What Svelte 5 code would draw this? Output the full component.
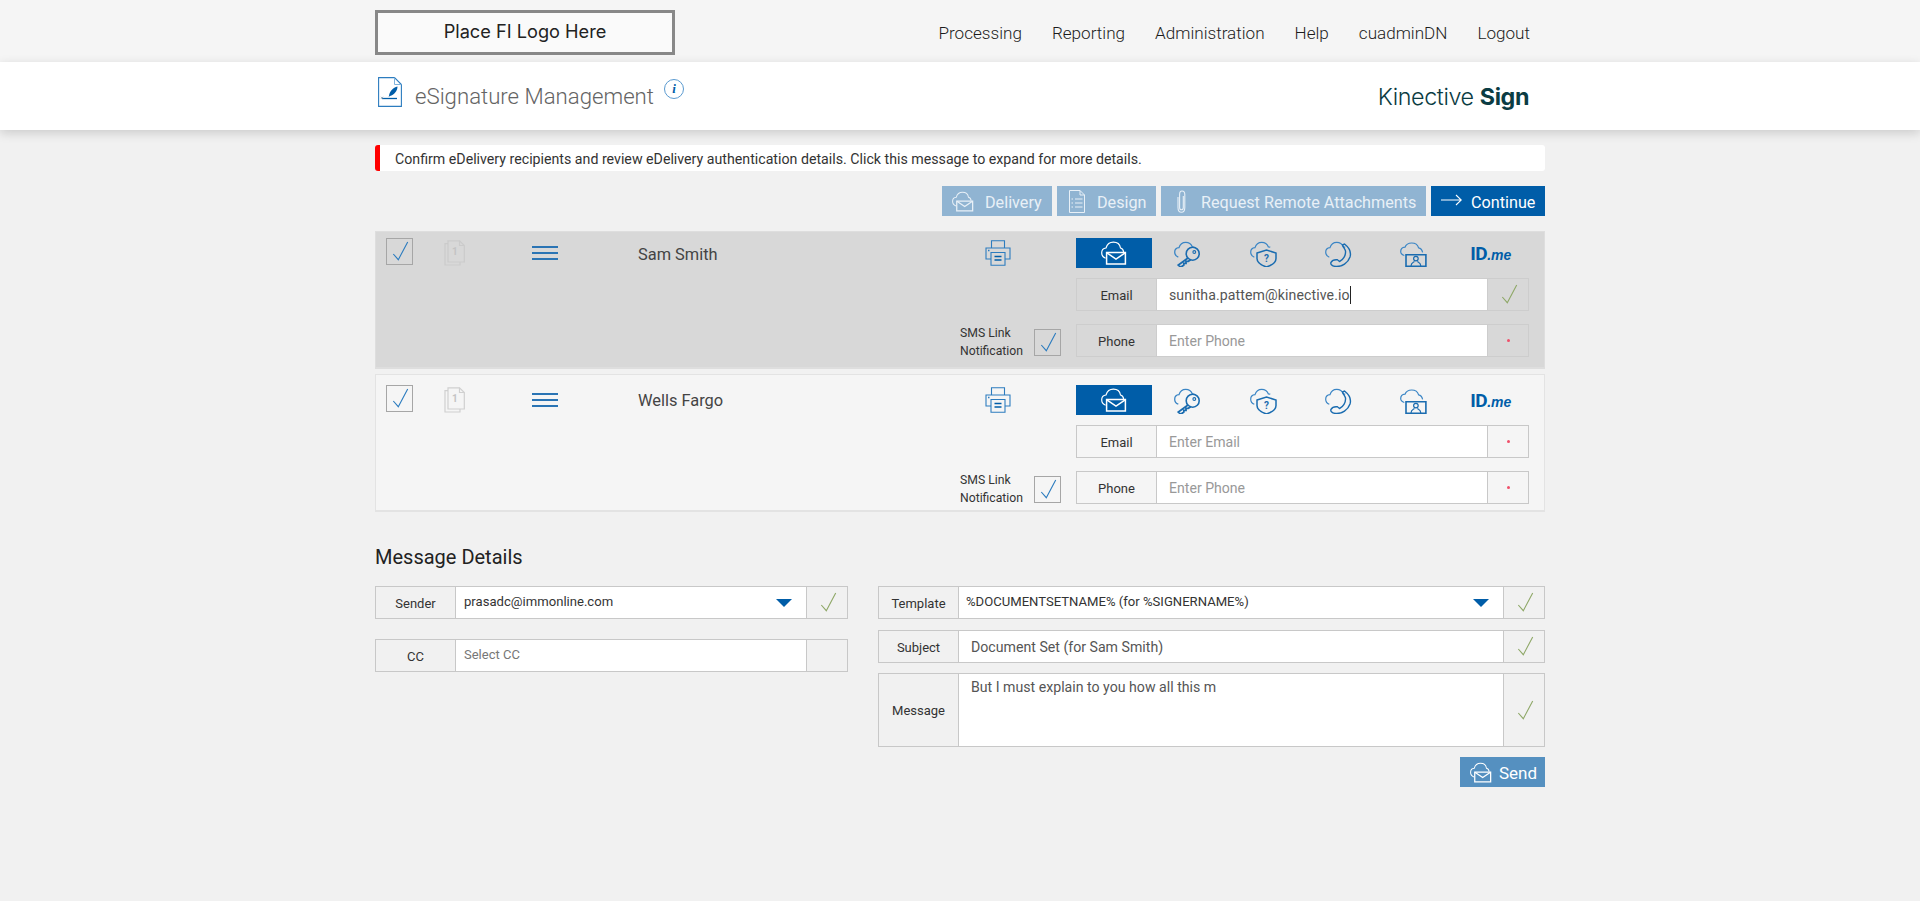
<script>
  const nav = ['Processing', 'Reporting', 'Administration', 'Help', 'cuadminDN', 'Logout'];
  const signers = [
    { name: 'Sam Smith', active: true, email: 'sunitha.pattem@kinective.io' },
    { name: 'Wells Fargo', active: false, email: '' }
  ];
</script>

{#snippet check(cls)}
  <svg class={cls} viewBox="0 0 27 27" width="27" height="27"><path d="M7.3 16 12.3 21.7 21.7 4" fill="none" stroke="currentColor" stroke-width="1.1"/></svg>
{/snippet}

{#snippet mail(w, h)}
  <svg width={w} height={h} viewBox="0 0 26 24" fill="none" stroke="currentColor" stroke-width="1.2">
    <path d="M4.6 17.2C2.2 16.4.7 14.2.7 11.8.7 9.2 2.6 7.2 5 7 6 3.6 9 1.2 12.4 1.2c3.6 0 6.5 2.4 7.1 5.8 1.7.4 2.9 1.9 3.1 4"/>
    <path d="M5.6 11.6H24.4V23H5.6Z" stroke-width="1.5"/><path d="M5.8 11.8 15 18 24.2 11.8" stroke-width="1.5"/>
  </svg>
{/snippet}

{#snippet cloud()}
  <path class="cl" d="M4.3 17.2C2.2 16.4.7 14.5.7 12.2.7 9.7 2.6 7.8 5 7.6 6 4.4 8.6 2.400 11.700 2.400c3 0 5.500 1.600 6.600 4.400.8 0 1.500.2 2 .5"/>
{/snippet}

{#snippet signer(s)}
  <div class="signer" class:active={s.active}>
    <div class="box">{@render check('chk')}</div>
    <div class="doc">
      <svg width="21" height="26" viewBox="0 0 21 26" fill="none" stroke="currentColor" stroke-width="1.2">
        <path d="M4 3.600H1V25H16V22"/><path d="M4 .8H15.500L20.300 5.500V22H4Z"/><path d="M15.500.8V5.500H20.300"/>
      </svg>
      <span>1</span>
    </div>
    <div class="burger"><i></i><i></i><i></i></div>
    <div class="name">{s.name}</div>
    <div class="mid">
      <svg class="printer" width="26" height="26" viewBox="0 0 26 26" fill="none" stroke="#2c7cbf" stroke-width="1.1">
        <path d="M6.500 8V.8H19.500V8"/><path d="M6 19H1V8H25V19H20"/><path d="M6 12.500H20V25.300H6Z"/>
        <path d="M9.500 16.500H16.500M9.500 20H16.500" stroke="#005da8" stroke-width="1.300"/><path d="M3 10.500H4.500" stroke-width="1.500"/>
      </svg>
      <div class="sms">
        <span class="smstext">SMS Link<br />Notification</span>
        <div class="box">{@render check('chk')}</div>
      </div>
    </div>
    <div class="auth">
      <div class="tabs">
        <div class="tab on">{@render mail(26, 24)}</div>
        <div class="tab ic i-key">
          <svg width="27" height="27" viewBox="0 0 27 27" fill="none" stroke="#1a6cb0" stroke-width="1.300">
            {@render cloud()}
            <circle cx="18.700" cy="13.700" r="6.500" stroke-width="1.600"/><circle cx="20.300" cy="12" r="1.400" stroke-width="1.100"/>
            <path d="M14.300 17.800 4.300 25 6.800 27.300 9.800 25V23.300H12V21.300H14.300L17 19.500" stroke-width="1.800"/>
          </svg>
        </div>
        <div class="tab ic i-shield">
          <svg width="27" height="27" viewBox="0 0 27 27" fill="none" stroke="#1a6cb0" stroke-width="1.200">
            {@render cloud()}
            <path d="M7 13 16.500 10 26 13V18.500C26 22 22.500 25 16.500 27 10.500 25 7 22 7 18.500Z" stroke-width="1.500"/>
            <text x="16.500" y="21.500" text-anchor="middle" class="q">?</text>
          </svg>
        </div>
        <div class="tab ic i-phone">
          <svg width="27" height="27" viewBox="0 0 27 27" fill="none" stroke="#1a6cb0" stroke-width="1.200">
            {@render cloud()}
            <path d="M17.500 5 19.500 4C24 7.500 26.500 12 25 17 23 23 17 26.800 11 26.500 7 26.300 5.200 24 6 22.300 7 20.500 10 19.500 12.500 19.800L14.500 21.500C18 20 21 15.500 20.500 11 20 9 18.300 7.500 17.500 5Z" stroke-width="1.400"/>
          </svg>
        </div>
        <div class="tab ic i-screen">
          <svg width="27" height="27" viewBox="0 0 27 27" fill="none" stroke="#1a6cb0" stroke-width="1.200">
            <path class="cl" d="M4.300 15.500C2.200 14.900.7 13.500.7 11.500.7 9 2.600 7.400 5 7.200 6 4.500 8.600 3 11.700 3c3.300 0 6 1.700 6.900 4.800 2 .3 3.500 2 4 4.500"/>
            <path d="M6 14.700H25.900V26.300H6Z" stroke-width="1.600"/>
            <circle cx="15.900" cy="18.600" r="2.300"/><path d="M11 26C11 22.800 13 22.500 14.500 21.500M20.800 26C20.800 22.800 18.800 22.500 17.300 21.500"/>
          </svg>
        </div>
        <div class="tab idme"><b>ID</b><em>.me</em></div>
      </div>
      <div class="field first" class:filled={s.email}>
        <span class="lbl">Email</span>
        <div class="val">
          {#if s.email}<span class="typed">{s.email}</span><span class="caret"></span>{:else}<span class="ph">Enter Email</span>{/if}
        </div>
        <div class="st">{#if s.email}{@render check('ok')}{:else}<i class="dot"></i>{/if}</div>
      </div>
      <div class="field">
        <span class="lbl">Phone</span>
        <div class="val"><span class="ph">Enter Phone</span></div>
        <div class="st"><i class="dot"></i></div>
      </div>
    </div>
  </div>
{/snippet}

<div class="page">
  <header class="top">
    <div class="wrap topin">
      <div class="logo">Place FI Logo Here</div>
      <nav>{#each nav as n}<span>{n}</span>{/each}</nav>
    </div>
  </header>
  <div class="head">
    <div class="wrap headin">
      <svg class="sig" width="24" height="30" viewBox="0 0 24 30" fill="none">
        <path d="M.6.6H16.500L23.400 7.500V29.400H.6Z" stroke="#2c7cbf" stroke-width="1.100"/><path d="M16.500.6V7.500H23.400" stroke="#7fb2dc" stroke-width="1"/>
        <path d="M11 19C11.500 14.500 15 10.500 19.500 9.500 19.500 14 16 18 12 19L10.500 20Z" fill="#005da8"/>
        <path d="M4 21.500H19" stroke="#005da8" stroke-width="1.300"/><path d="M3 19.800 5 21.800M5 19.800 3 21.800" stroke="#7a93a8" stroke-width=".8"/>
      </svg>
      <h1>eSignature Management</h1>
      <span class="info">i</span>
      <div class="brand">Kinective <b>Sign</b></div>
    </div>
  </div>

  <main class="wrap">
    <div class="alert">Confirm eDelivery recipients and review eDelivery authentication details. Click this message to expand for more details.</div>
    <div class="actions">
      <button class="btn dim b1">{@render mail(22, 21)}<span>Delivery</span></button>
      <button class="btn dim b2">
        <svg width="16" height="23" viewBox="0 0 16 23" fill="none" stroke="currentColor" stroke-width="1"><path d="M.5.500H11L15.500 5V22.500H.5Z"/><path d="M11 .5V5H15.500"/><path d="M2.500 9H4M6 9H13.500M2.500 13H4M6 13H13.500M2.500 17H4M6 17H13.500"/></svg>
        <span>Design</span>
      </button>
      <button class="btn dim b3">
        <svg width="9" height="23" viewBox="0 0 9 23" fill="none" stroke="currentColor" stroke-width="1.100"><path d="M6.300 6V17.500C6.300 19 5.500 19.800 4.400 19.800 3.300 19.800 2.600 19 2.600 17.500V4.500C2.600 2.300 3.500 1 5 1 6.800 1 7.800 2.300 7.800 4.500V17.500C7.800 20.500 6.500 22.300 4.400 22.300 2.300 22.300 1 20.500 1 17.500V7"/></svg>
        <span>Request Remote Attachments</span>
      </button>
      <button class="btn go b4">
        <svg width="21" height="12" viewBox="0 0 21 12" fill="none" stroke="currentColor" stroke-width="1.100"><path d="M0 6H20M15 1 20.300 6 15 11"/></svg>
        <span>Continue</span>
      </button>
    </div>

    <div class="signers">
      {#each signers as s}{@render signer(s)}{/each}
    </div>

    <h2>Message Details</h2>
    <div class="details">
      <div class="col left">
        <div class="field sender">
          <span class="lbl">Sender</span>
          <div class="val sel"><span class="selv">prasadc@immonline.com</span><i class="tri"></i></div>
          <div class="st">{@render check('ok')}</div>
        </div>
        <div class="field cc">
          <span class="lbl">CC</span>
          <div class="val sel"><span class="selph">Select CC</span></div>
          <div class="st"></div>
        </div>
      </div>
      <div class="col right">
        <div class="field">
          <span class="lbl">Template</span>
          <div class="val sel"><span class="tpl">%DOCUMENTSETNAME% (for %SIGNERNAME%)</span><i class="tri"></i></div>
          <div class="st">{@render check('ok')}</div>
        </div>
        <div class="field subject">
          <span class="lbl">Subject</span>
          <div class="val"><span class="txt">Document Set (for Sam Smith)</span></div>
          <div class="st">{@render check('ok')}</div>
        </div>
        <div class="field message">
          <span class="lbl">Message</span>
          <div class="val area"><span class="txt">But I must explain to you how all this m</span></div>
          <div class="st">{@render check('ok')}</div>
        </div>
        <div class="sendrow">
          <button class="btn send">{@render mail(22, 21)}<span>Send</span></button>
        </div>
      </div>
    </div>
  </main>
</div>

<style>
  :global(body) { margin: 0; background: #f1f1f1; font-family: Roboto, "Liberation Sans", sans-serif; }
  .page { background: #f1f1f1; overflow: hidden; height: 901px; }
  .wrap { width: 1170px; margin: 0 auto; }

  .top { height: 62px; background: #f5f5f5; }
  .topin { display: flex; justify-content: space-between; align-items: flex-start; }
  .logo { width: 300px; height: 45px; margin-top: 10px; box-sizing: border-box; border: 3px solid #888; background: #fafafa; display: flex; align-items: center; justify-content: center; font: 400 18.2px Inter, sans-serif; color: #222; padding-bottom: 3px; }
  nav { display: flex; gap: 30px; padding-right: 15px; height: 62px; align-items: center; padding-top: 4px; box-sizing: border-box; font-weight: 300; font-size: 17.1px; color: #1c1c1c; }

  .head { height: 68px; background: #fff; box-shadow: 0 3px 10px rgba(0,0,0,.16); position: relative; }
  .headin { display: flex; align-items: flex-start; position: relative; height: 68px; }
  .sig { margin: 15px 0 0 3px; flex: none; }
  h1 { margin: 18px 0 0 13px; font-size: 22.2px; line-height: 32px; font-weight: 300; color: #646464; }
  .info { width: 20px; height: 20px; margin: 17px 0 0 10px; box-sizing: border-box; border: 1px solid #5a9ad0; border-radius: 50%; color: #005da8; font: italic 700 13px/18px "Liberation Serif", serif; text-align: center; }
  .brand { margin-left: auto; margin-right: 16px; margin-top: 19px; font: 300 23.3px/32px Inter, sans-serif; color: #0b3c43; letter-spacing: -.4px; }
  .brand b { font-weight: 700; }

  .alert { margin-top: 15px; height: 26px; box-sizing: border-box; background: #fff; border-left: 5px solid #f00; border-radius: 3px; padding: 1px 0 0 15px; font-size: 14.2px; line-height: 26px; color: #333; }

  .actions { display: flex; justify-content: flex-end; gap: 5px; margin-top: 15px; }
  .btn { height: 30px; border: 0; padding: 0; display: flex; align-items: center; color: #fff; font: 400 16.2px Roboto, sans-serif; box-sizing: border-box; }
  .btn span { padding-top: 2px; }
  .dim { background: #90b4d2; color: #e8f0f7; }
  .go { background: #005da8; }
  .b1 { width: 110px; padding-left: 10px; gap: 11px; }
  .b2 { width: 99px; padding-left: 12px; gap: 12px; }
  .b3 { width: 265px; padding-left: 16px; gap: 15px; }
  .b4 { width: 114px; padding-left: 10px; gap: 9px; }
  .b4 svg { margin-top: -3px; }

  .signers { margin-top: 15px; display: flex; flex-direction: column; gap: 5px; }
  .signer { display: grid; grid-template-columns: 58px 88px 106px 323px 115px 453px; height: 138px; box-sizing: border-box; padding: 10px 0 0 10px; border: 1px solid #e3e3e3; border-bottom-width: 2px; background: #f5f5f5; }
  .signer.active { background: #d8d8d8; border-color: #dedede; padding-top: 6px; }
  .box { width: 27px; height: 27px; box-sizing: border-box; border: 1px solid #a6a6a6; color: #2c7cbf; }
  .box :global(.chk) { display: block; margin: -1px; }
  .doc { position: relative; width: 21px; height: 26px; margin-top: 2px; color: #d0d0d0; }
  .active .doc { color: #cbcbcb; }
  .doc svg { display: block; }
  .doc span { position: absolute; left: 8px; top: 6px; font-size: 10px; font-weight: 700; color: #c4c4c4; }
  .burger { display: flex; flex-direction: column; gap: 4px; width: 26px; margin-top: 8px; }
  .burger i { display: block; height: 2px; background: #2a74b4; }
  .name { font-size: 16.4px; line-height: 22px; color: #444; margin-top: 5px; }
  .active .name { margin-top: 6px; }
  .mid { display: flex; flex-direction: column; justify-content: space-between; height: 119px; }
  .printer { margin: 2px 0 0 24px; display: block; }
  .sms { display: flex; align-items: center; gap: 10px; margin-bottom: -3px; }
  .smstext { width: 63px; font-size: 12.2px; line-height: 18px; color: #333; white-space: nowrap; margin-left: -1px; margin-right: 1px; }
  .auth { display: flex; flex-direction: column; }
  .tabs { display: grid; grid-template-columns: 76px repeat(5, 1fr); height: 30px; }
  .tab { display: flex; align-items: center; justify-content: center; }
  .tab.on { background: #005da8; color: #fff; }
  .tab :global(.cl) { stroke: #3a85c5; }
  .ic { box-sizing: border-box; }
  .i-key { padding-right: 5px; }
  .i-shield { padding-right: 3px; }
  .i-phone { padding-right: 4px; }
  .i-screen { padding-right: 4px; }
  .q { font: 700 10px Roboto, sans-serif; fill: #1a6cb0; stroke: none; }
  .idme { color: #005da8; align-items: baseline; padding-top: 6px; padding-right: 1px; box-sizing: border-box; }
  .idme b { font: 700 19px/20px Roboto, sans-serif; letter-spacing: -.5px; }
  .idme em { font: italic 700 14px/20px "Liberation Sans", sans-serif; }

  .field { display: grid; grid-template-columns: 79px 1fr 40px; height: 33px; box-sizing: border-box; border: 1px solid #c8c8c8; margin-top: 13px; }
  .field.first { margin-top: 10px; }
  .active .field { border-color: #cdcdcd; }
  .lbl { display: flex; align-items: center; justify-content: center; font-size: 13px; color: #333; padding-top: 1px; }
  .val { background: #fff; border-left: 1px solid #c8c8c8; border-right: 1px solid #c8c8c8; display: flex; align-items: center; padding-left: 12px; font-size: 14.1px; position: relative; }
  .active .val { border-color: #cdcdcd; }
  .typed { color: #555; letter-spacing: .1px; }
  .caret { width: 1px; height: 18px; background: #222; }
  .ph { color: #999; }
  .st { display: flex; align-items: center; justify-content: center; }
  .st :global(.ok) { color: #8fa868; }
  .dot { width: 3px; height: 3px; border-radius: 50%; background: #f0506a; }

  h2 { margin: 33px 0 0; font-size: 20px; line-height: 24px; font-weight: 400; color: #222; }
  .details { display: flex; gap: 30px; margin-top: 17px; }
  .col { display: flex; flex-direction: column; }
  .left { width: 473px; }
  .right { width: 667px; }
  .col .field { margin-top: 0; }
  .cc { margin-top: 20px !important; }
  .sel { padding-left: 7px; padding-right: 14px; justify-content: space-between; padding-bottom: 2px; box-sizing: border-box; }
  .left .sel { padding-left: 8px; }
  .selv { color: #333; font-size: 13.1px; }
  .selph { color: #777; font-size: 13px; }
  .tpl { color: #333; font-size: 13.1px; }
  .txt { color: #555; font-size: 14.15px; }
  .tri { width: 0; height: 0; border-left: 8px solid transparent; border-right: 8px solid transparent; border-top: 8px solid #005da8; margin-top: 3px; }
  .right .subject { margin-top: 11px; }
  .right .message { margin-top: 10px; height: 74px; }
  .area { align-items: flex-start; padding-top: 5px; }
  .sendrow { display: flex; justify-content: flex-end; margin-top: 10px; }
  .send { width: 85px; background: #5590c0; padding-left: 10px; gap: 7px; font-size: 17px; }
</style>
